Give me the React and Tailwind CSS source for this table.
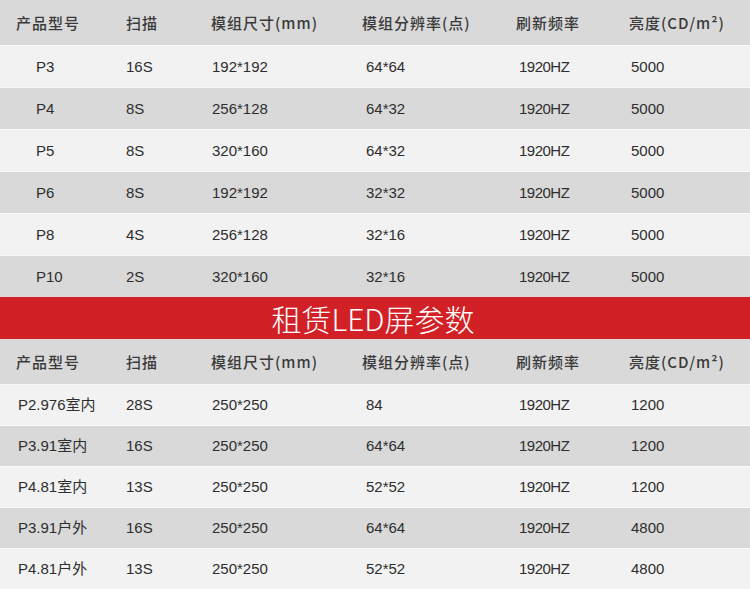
import React from 'react'

const widths = ['w-[126px]', 'w-[85px]', 'w-[151px]', 'w-[154px]', 'w-[113px]', 'flex-1']

const headers = ['产品型号', '扫描', '模组尺寸(mm)', '模组分辨率(点)', '刷新频率', '亮度(CD/m²)']

const sale = [
  ['P3', '16S', '192*192', '64*64', '1920HZ', '5000'],
  ['P4', '8S', '256*128', '64*32', '1920HZ', '5000'],
  ['P5', '8S', '320*160', '64*32', '1920HZ', '5000'],
  ['P6', '8S', '192*192', '32*32', '1920HZ', '5000'],
  ['P8', '4S', '256*128', '32*16', '1920HZ', '5000'],
  ['P10', '2S', '320*160', '32*16', '1920HZ', '5000'],
]

const rental = [
  ['P2.976室内', '28S', '250*250', '84', '1920HZ', '1200'],
  ['P3.91室内', '16S', '250*250', '64*64', '1920HZ', '1200'],
  ['P4.81室内', '13S', '250*250', '52*52', '1920HZ', '1200'],
  ['P3.91户外', '16S', '250*250', '64*64', '1920HZ', '4800'],
  ['P4.81户外', '13S', '250*250', '52*52', '1920HZ', '4800'],
]

const HeaderRow = () => (
  <div className="flex items-center h-[45px] bg-[#d9d9d9] text-[15px] tracking-[1px] font-medium text-[#3a3a3a] font-['Noto_Sans_CJK_SC',sans-serif]">
    {headers.map((h, i) => (
      <div key={h} className={`${widths[i]} ${i === 0 ? 'pl-[16px]' : ''} pt-[2px]`}>
        {h}
      </div>
    ))}
  </div>
)

const DataRow = ({ cells, odd, first, tall }) => {
  const pads = [first ? 'pl-[36px]' : 'pl-[18px]', 'pl-0', 'pl-[1px]', 'pl-[4px]', 'pl-[3px]', 'pl-[2px]']
  return (
    <div
      className={`flex items-center ${tall ? 'h-[42px]' : 'h-[41px]'} border-t border-[#f9f9f9] ${
        odd ? 'bg-[#d9d9d9]' : 'bg-[#f2f2f2]'
      } text-[15px] text-[#2e2e2e] font-['Liberation_Sans','Noto_Sans_CJK_SC',sans-serif]`}
    >
      {cells.map((c, i) => (
        <div key={i} className={`${widths[i]} ${pads[i]} pt-[1px] ${i === 4 ? 'tracking-[-0.5px]' : ''}`}>
          {c}
        </div>
      ))}
    </div>
  )
}

const App = () => {
  return (
    <div className="w-[750px] h-[589px] overflow-hidden bg-[#f2f2f2]">
      <HeaderRow />
      {sale.map((r, i) => (
        <DataRow key={r[0]} cells={r} odd={i % 2 === 1} first tall />
      ))}
      <div className="h-[42px] bg-[#d22126] flex items-center justify-center pr-[4px] text-white text-[30px] leading-none font-['Noto_Sans_CJK_SC',sans-serif] font-light">
        租赁LED屏参数
      </div>
      <HeaderRow />
      {rental.map((r, i) => (
        <DataRow key={r[0]} cells={r} odd={i % 2 === 1} />
      ))}
    </div>
  )
}

export default App
